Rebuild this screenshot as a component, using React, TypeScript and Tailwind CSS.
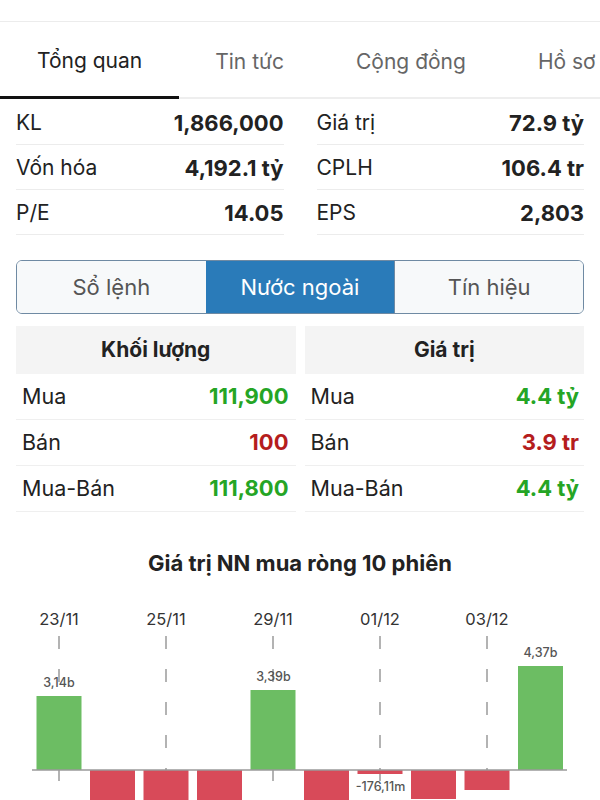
import React from "react";

const tabs = ["Tổng quan", "Tin tức", "Cộng đồng", "Hồ sơ"];

const stats = [
  ["KL", "1,866,000", "Giá trị", "72.9 tỷ"],
  ["Vốn hóa", "4,192.1 tỷ", "CPLH", "106.4 tr"],
  ["P/E", "14.05", "EPS", "2,803"],
];

const foreign = [
  { label: "Mua", vol: "111,900", val: "4.4 tỷ", up: true },
  { label: "Bán", vol: "100", val: "3.9 tr", up: false },
  { label: "Mua-Bán", vol: "111,800", val: "4.4 tỷ", up: true },
];

// bar heights in px relative to the zero line (positive = up)
const bars = [74, -40, -40, -40, 80, -40, -4, -29, -20, 104];
const dates = ["23/11", "25/11", "29/11", "01/12", "03/12"];

const Chart = () => {
  const zero = 179;
  const step = 53.5;
  const x0 = 36.5;
  const w = 45;
  return (
    <svg width="600" height="210" viewBox="0 0 600 210" className="block">
      {dates.map((d, i) => {
        const cx = x0 + i * 2 * step + w / 2;
        return (
          <g key={d}>
            <text x={cx} y={34} textAnchor="middle" fontSize="16.5" fill="#333">
              {d}
            </text>
            <line
              x1={cx}
              x2={cx}
              y1={45}
              y2={210}
              stroke="#9a9a9a"
              strokeWidth="1.5"
              strokeDasharray="13 20"
            />
          </g>
        );
      })}
      {bars.map((h, i) => {
        const x = x0 + i * step;
        return (
          <rect
            key={i}
            x={x}
            y={h > 0 ? zero - h : zero}
            width={w}
            height={Math.abs(h)}
            fill={h > 0 ? "#6cbd63" : "#d84a59"}
          />
        );
      })}
      <line x1="32" x2="567" y1={zero} y2={zero} stroke="#9a9a9a" strokeWidth="1.5" />
      <g fontSize="12.5" fill="#555" fontWeight="500" textAnchor="middle">
        <text x={59} y={96}>3,14b</text>
        <text x={273.5} y={90}>3,39b</text>
        <text x={540.5} y={66}>4,37b</text>
        <text x={380.5} y={200}>-176,11m</text>
      </g>
    </svg>
  );
};

export default function App() {
  return (
    <div
      className="h-[800px] w-[600px] overflow-hidden bg-white text-[#222]"
      style={{ fontFamily: "Inter, 'Noto Sans', sans-serif" }}
    >
      <div className="h-[22px] border-b border-[#ececec]" />

      {/* tabs */}
      <div className="flex h-[77px] items-end whitespace-nowrap">
        {tabs.map((t, i) => (
          <div
            key={t}
            className={
              i === 0
                ? "flex h-full shrink-0 items-center border-b-[3px] border-[#111] px-[37px] pt-[4px] text-[21px] text-[#222]"
                : "flex h-full shrink-0 items-center border-b-2 border-[#eeeeee] px-[36px] pt-[4px] text-[21px] text-[#666]"
            }
          >
            {t}
          </div>
        ))}
      </div>

      {/* stats */}
      <div className="grid grid-cols-2 gap-x-[33px] px-4 pt-[1px]">
        {stats.map((r) => (
          <React.Fragment key={r[0]}>
            <div className="flex h-[45px] items-center justify-between border-b border-[#ececec] pt-[2px] text-[21px]">
              <span>{r[0]}</span>
              <span className="text-[22px] font-bold">{r[1]}</span>
            </div>
            <div className="flex h-[45px] items-center justify-between border-b border-[#ececec] pt-[2px] text-[21px]">
              <span>{r[2]}</span>
              <span className="text-[22px] font-bold">{r[3]}</span>
            </div>
          </React.Fragment>
        ))}
      </div>

      {/* segmented control */}
      <div className="mx-4 mt-[25px] grid h-[54px] grid-cols-3 overflow-hidden rounded-md border-[1.5px] border-[#6f8aa3] text-[22px]">
        <div className="flex items-center justify-center bg-[#f7f9fa] text-[#555]">Sổ lệnh</div>
        <div className="flex items-center justify-center bg-[#2a7bb9] text-white">Nước ngoài</div>
        <div className="flex items-center justify-center border-l border-[#6f8aa3] bg-[#f7f9fa] text-[#555]">
          Tín hiệu
        </div>
      </div>

      {/* foreign trading */}
      <div className="mt-[12px] grid grid-cols-2 gap-x-[9px] px-4">
        <div className="flex h-[48px] items-center justify-center bg-[#f4f4f4] text-[21px] font-bold">
          Khối lượng
        </div>
        <div className="flex h-[48px] items-center justify-center bg-[#f4f4f4] text-[21px] font-bold">
          Giá trị
        </div>
        {foreign.map((r) => (
          <React.Fragment key={r.label}>
            <div className="flex h-[46px] items-center justify-between border-b border-[#efefef] pl-[6px] pr-[7px] text-[21.5px]">
              <span>{r.label}</span>
              <span className={r.up ? "text-[22px] font-bold text-[#25a525]" : "text-[22px] font-bold text-[#b51d1d]"}>
                {r.vol}
              </span>
            </div>
            <div className="flex h-[46px] items-center justify-between border-b border-[#efefef] pl-[6px] pr-[5px] text-[21.5px]">
              <span>{r.label}</span>
              <span className={r.up ? "text-[22px] font-bold text-[#25a525]" : "text-[22px] font-bold text-[#b51d1d]"}>
                {r.val}
              </span>
            </div>
          </React.Fragment>
        ))}
      </div>

      {/* chart */}
      <div className="mt-[35px] text-center text-[22px] font-bold text-[#222]">
        Giá trị NN mua ròng 10 phiên
      </div>
      <div className="mt-[11px]">
        <Chart />
      </div>
    </div>
  );
}
